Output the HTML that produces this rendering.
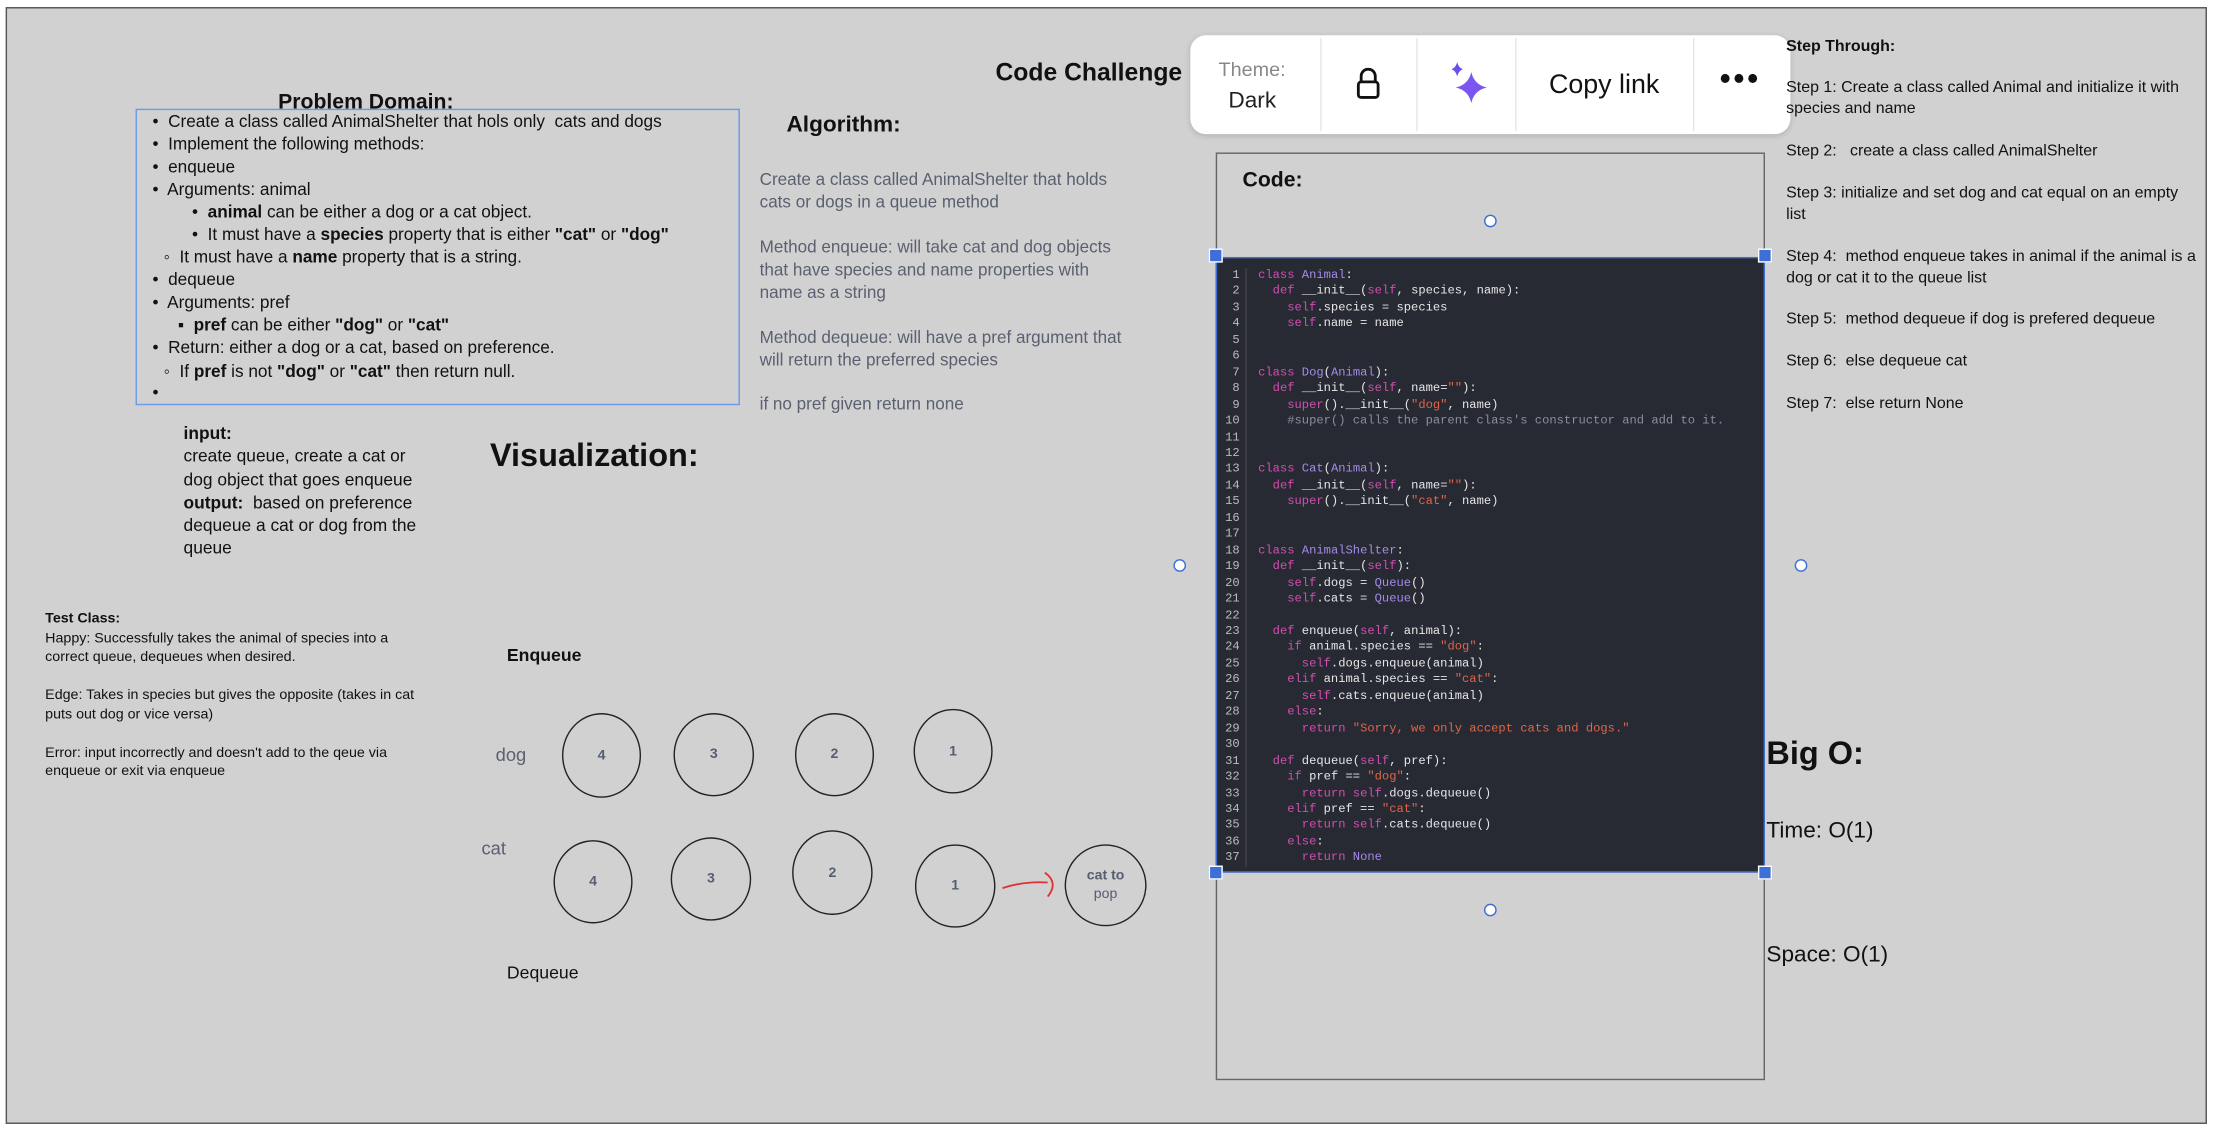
<!DOCTYPE html>
<html><head><meta charset="utf-8"><style>
html,body{margin:0;padding:0;width:2214px;height:1134px;overflow:hidden;background:#fff}
#w{position:absolute;left:0;top:0;width:1568px;height:803px;transform:scale(1.41199);transform-origin:0 0;font-family:"Liberation Sans",sans-serif;color:#111}
.a{position:absolute;white-space:nowrap}
.frame{position:absolute;left:4px;top:5px;width:1557px;height:789px;background:#d1d1d1;border:1px solid #555}
.pd{font-size:12.2px;line-height:16px}
.pd div{position:absolute;white-space:nowrap}
.g{color:#5a6070}
.code{position:absolute;left:861px;top:182px;width:389px;height:436px;background:#272a33;border:1.5px solid #3d6fd6;box-sizing:border-box;font-family:"Liberation Mono",monospace;font-size:8.6px;line-height:11.45px;color:#e6e6e6}
.gut{position:absolute;left:0;top:7px;width:21px;text-align:right;color:#bbb;border-right:1px solid #444;height:424px;box-sizing:border-box;padding-right:4px}
.src{position:absolute;left:29px;top:7px;white-space:pre}
.k{color:#d14fb0}.c{color:#a48be8}.s{color:#e0654a}.cm{color:#8a8f9a}
.h{position:absolute;width:10px;height:10px;background:#3d6fd6;border:1.5px solid #fff;box-sizing:border-box}
.o{position:absolute;width:9px;height:9px;border:1.5px solid #3d6fd6;border-radius:50%;background:#fff;box-sizing:border-box}
.cir{position:absolute;border:1.2px solid #222;border-radius:50%;box-sizing:border-box;font-size:10px;color:#555e70;font-weight:bold;display:flex;align-items:center;justify-content:center}
.st{font-size:11.3px;line-height:15px;position:absolute;left:1265px;width:292px}
</style></head><body><div id="w">
<div class="frame"></div>
<div class="a" style="left:705px;top:41px;font-size:17.5px;font-weight:bold">Code Challenge</div>
<div class="a" style="left:197px;top:64px;font-size:15px;font-weight:bold">Problem Domain:</div>
<div style="position:absolute;left:96px;top:77px;width:428px;height:210px;border:1.2px solid #6b9ae8;box-sizing:border-box"></div>
<div class="pd">
<div style="left:108px;top:78px">•&nbsp; Create a class called AnimalShelter that hols only&nbsp; cats and dogs</div>
<div style="left:108px;top:94px">•&nbsp; Implement the following methods:</div>
<div style="left:108px;top:110px">•&nbsp; enqueue</div>
<div style="left:108px;top:126px">•&nbsp; Arguments: animal</div>
<div style="left:136px;top:142px">•&nbsp; <b>animal</b> can be either a dog or a cat object.</div>
<div style="left:136px;top:158px">•&nbsp; It must have a <b>species</b> property that is either <b>"cat"</b> or <b>"dog"</b></div>
<div style="left:116px;top:174px">◦&nbsp; It must have a <b>name</b> property that is a string.</div>
<div style="left:108px;top:190px">•&nbsp; dequeue</div>
<div style="left:108px;top:206px">•&nbsp; Arguments: pref</div>
<div style="left:126px;top:222px">▪&nbsp; <b>pref</b> can be either <b>"dog"</b> or <b>"cat"</b></div>
<div style="left:108px;top:238px">•&nbsp; Return: either a dog or a cat, based on preference.</div>
<div style="left:116px;top:255px">◦&nbsp; If <b>pref</b> is not <b>"dog"</b> or <b>"cat"</b> then return null.</div>
<div style="left:108px;top:270px">•</div>
</div>
<div class="a" style="left:557px;top:80px;font-size:16px;font-weight:bold">Algorithm:</div>
<div class="a g" style="left:538px;top:119px;font-size:12.1px;line-height:16px">Create a class called AnimalShelter that holds<br>cats or dogs in a queue method</div>
<div class="a g" style="left:538px;top:167px;font-size:12.1px;line-height:16px">Method enqueue: will take cat and dog objects<br>that have species and name properties with<br>name as a string</div>
<div class="a g" style="left:538px;top:231px;font-size:12.1px;line-height:16px">Method dequeue: will have a pref argument that<br>will return the preferred species</div>
<div class="a g" style="left:538px;top:279px;font-size:12.1px">if no pref given return none</div>
<div class="a" style="left:130px;top:299px;font-size:12.3px;line-height:16.3px"><b>input:</b><br>create queue, create a cat or<br>dog object that goes enqueue<br><b>output:</b>&nbsp; based on preference<br>dequeue a cat or dog from the<br>queue</div>
<div class="a" style="left:347px;top:309px;font-size:23px;font-weight:bold">Visualization:</div>
<div class="a" style="left:32px;top:432px;font-size:10.1px;line-height:13.5px"><b>Test Class:</b><br>Happy: Successfully takes the animal of species into a<br>correct queue, dequeues when desired.<br><br>Edge: Takes in species but gives the opposite (takes in cat<br>puts out dog or vice versa)<br><br>Error: input incorrectly and doesn't add to the qeue via<br>enqueue or exit via enqueue</div>
<div class="a" style="left:359px;top:457px;font-size:12.5px;font-weight:bold">Enqueue</div>
<div class="a" style="left:359px;top:682px;font-size:12.5px">Dequeue</div>
<div class="a g" style="left:351px;top:527px;font-size:13px">dog</div>
<div class="a g" style="left:341px;top:593px;font-size:13px">cat</div>
<div class="cir" style="left:398px;top:505px;width:56px;height:60px">4</div>
<div class="cir" style="left:477px;top:505px;width:57px;height:59px">3</div>
<div class="cir" style="left:563px;top:505px;width:56px;height:59px">2</div>
<div class="cir" style="left:647px;top:502px;width:56px;height:60px">1</div>
<div class="cir" style="left:392px;top:595px;width:56px;height:59px">4</div>
<div class="cir" style="left:475px;top:593px;width:57px;height:59px">3</div>
<div class="cir" style="left:561px;top:588px;width:57px;height:60px">2</div>
<div class="cir" style="left:648px;top:598px;width:57px;height:59px">1</div>
<div class="cir" style="left:754px;top:598px;width:58px;height:58px;flex-direction:column;font-size:10px;line-height:13px"><span>cat to</span><span style="font-weight:normal">pop</span></div>
<svg style="position:absolute;left:700px;top:580px" width="60" height="60"><path d="M10 49 Q25 44 42 45" stroke="#e03030" stroke-width="1.3" fill="none"/><path d="M40 38 Q50 45 42 55" stroke="#e03030" stroke-width="1.3" fill="none"/></svg>
<div style="position:absolute;left:861px;top:108px;width:389px;height:657px;border:1px solid #666;box-sizing:border-box"></div>
<div class="a" style="left:880px;top:119px;font-size:15px;font-weight:bold">Code:</div>
<div class="code"><div class="gut">1<br>2<br>3<br>4<br>5<br>6<br>7<br>8<br>9<br>10<br>11<br>12<br>13<br>14<br>15<br>16<br>17<br>18<br>19<br>20<br>21<br>22<br>23<br>24<br>25<br>26<br>27<br>28<br>29<br>30<br>31<br>32<br>33<br>34<br>35<br>36<br>37</div><div class="src"><span class="k">class</span> <span class="c">Animal</span>:
  <span class="k">def</span> __init__(<span class="k">self</span>, species, name):
    <span class="k">self</span>.species = species
    <span class="k">self</span>.name = name


<span class="k">class</span> <span class="c">Dog</span>(<span class="c">Animal</span>):
  <span class="k">def</span> __init__(<span class="k">self</span>, name=<span class="s">""</span>):
    <span class="k">super</span>().__init__(<span class="s">"dog"</span>, name)
    <span class="cm">#super() calls the parent class's constructor and add to it.</span>


<span class="k">class</span> <span class="c">Cat</span>(<span class="c">Animal</span>):
  <span class="k">def</span> __init__(<span class="k">self</span>, name=<span class="s">""</span>):
    <span class="k">super</span>().__init__(<span class="s">"cat"</span>, name)


<span class="k">class</span> <span class="c">AnimalShelter</span>:
  <span class="k">def</span> __init__(<span class="k">self</span>):
    <span class="k">self</span>.dogs = <span class="c">Queue</span>()
    <span class="k">self</span>.cats = <span class="c">Queue</span>()

  <span class="k">def</span> enqueue(<span class="k">self</span>, animal):
    <span class="k">if</span> animal.species == <span class="s">"dog"</span>:
      <span class="k">self</span>.dogs.enqueue(animal)
    <span class="k">elif</span> animal.species == <span class="s">"cat"</span>:
      <span class="k">self</span>.cats.enqueue(animal)
    <span class="k">else</span>:
      <span class="k">return</span> <span class="s">"Sorry, we only accept cats and dogs."</span>

  <span class="k">def</span> dequeue(<span class="k">self</span>, pref):
    <span class="k">if</span> pref == <span class="s">"dog"</span>:
      <span class="k">return</span> <span class="k">self</span>.dogs.dequeue()
    <span class="k">elif</span> pref == <span class="s">"cat"</span>:
      <span class="k">return</span> <span class="k">self</span>.cats.dequeue()
    <span class="k">else</span>:
      <span class="k">return</span> <span class="c">None</span></div></div>
<div class="h" style="left:856px;top:176px"></div><div class="h" style="left:1245px;top:176px"></div>
<div class="h" style="left:856px;top:613px"></div><div class="h" style="left:1245px;top:613px"></div>
<div class="o" style="left:1051px;top:152px"></div><div class="o" style="left:1051px;top:640px"></div>
<div class="o" style="left:831px;top:396px"></div><div class="o" style="left:1271px;top:396px"></div>
<div style="position:absolute;left:843px;top:25px;width:425px;height:70px;background:#fff;border-radius:11px;box-shadow:0 1px 4px rgba(0,0,0,.15)">
<div style="position:absolute;left:92px;top:2px;width:1px;height:66px;background:#e6e6e6"></div>
<div style="position:absolute;left:160px;top:2px;width:1px;height:66px;background:#e6e6e6"></div>
<div style="position:absolute;left:230px;top:2px;width:1px;height:66px;background:#e6e6e6"></div>
<div style="position:absolute;left:356px;top:2px;width:1px;height:66px;background:#e6e6e6"></div>
<div class="a" style="left:20px;top:16px;font-size:14px;color:#888">Theme:</div>
<div class="a" style="left:27px;top:38px;font-size:16px;color:#222">Dark</div>
<svg style="position:absolute;left:116px;top:23px" width="20" height="24"><path d="M5 10 V6 a5 5 0 0 1 10 0 V10" stroke="#111" stroke-width="2" fill="none"/><rect x="3" y="10" width="14" height="11" rx="2" stroke="#111" stroke-width="2" fill="none"/></svg>
<svg style="position:absolute;left:180px;top:18px" width="36" height="34"><path d="M19 8 Q21 17 30 19 Q21 21 19 30 Q17 21 8 19 Q17 17 19 8Z" fill="#7a55f0"/><path d="M9 1 Q10 5 13 6 Q10 7 9 11 Q8 7 5 6 Q8 5 9 1Z" fill="#6a4ef0"/></svg>
<div class="a" style="left:254px;top:25px;font-size:19px;color:#111">Copy link</div>
<div class="a" style="left:375px;top:18px;font-size:22px;font-weight:bold;letter-spacing:2px">•••</div>
</div>
<div class="a" style="left:1265px;top:27px;font-size:11.3px;font-weight:bold">Step Through:</div>
<div class="st" style="top:55px">Step 1: Create a class called Animal and initialize it with species and name</div>
<div class="st" style="top:100px">Step 2:&nbsp; &nbsp;create a class called AnimalShelter</div>
<div class="st" style="top:130px">Step 3: initialize and set dog and cat equal on an empty list</div>
<div class="st" style="top:175px">Step 4:&nbsp; method enqueue takes in animal if the animal is a dog or cat it to the queue list</div>
<div class="st" style="top:219px">Step 5:&nbsp; method dequeue if dog is prefered dequeue</div>
<div class="st" style="top:249px">Step 6:&nbsp; else dequeue cat</div>
<div class="st" style="top:279px">Step 7:&nbsp; else return None</div>
<div class="a" style="left:1251px;top:520px;font-size:23px;font-weight:bold">Big O:</div>
<div class="a" style="left:1251px;top:580px;font-size:16px">Time: O(1)</div>
<div class="a" style="left:1251px;top:668px;font-size:16px">Space: O(1)</div>
</div></body></html>
